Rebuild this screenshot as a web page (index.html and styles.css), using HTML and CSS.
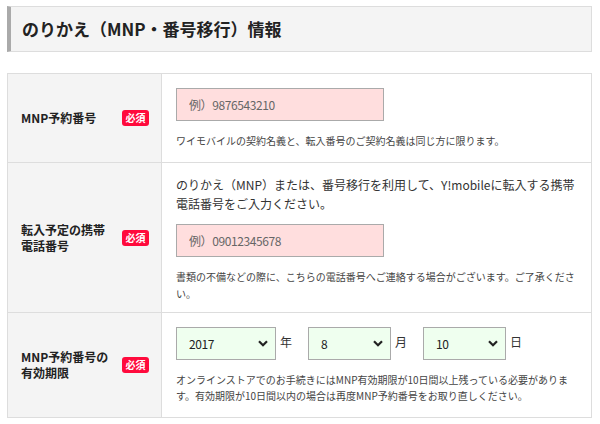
FILE: index.html
```html
<!DOCTYPE html>
<html lang="ja">

<head>
    <meta charset="UTF-8">
    <meta name="viewport" content="width=device-width, initial-scale=1.0">
    <title>のりかえ（MNP・番号移行）情報</title>
    <link rel="stylesheet" href="styles.css">
</head>

<body>
    <div class="page">
        <h2 class="section-title">のりかえ（MNP・番号移行）情報</h2>

        <table class="form-table">
            <tr class="row-mnp">
                <th>
                    <div class="label">
                        <span class="label-text">MNP予約番号</span>
                        <span class="required">必須</span>
                    </div>
                </th>
                <td>
                    <input class="text-input" type="text" placeholder="例）9876543210">
                    <p class="note">ワイモバイルの契約名義と、転入番号のご契約名義は同じ方に限ります。</p>
                </td>
            </tr>
            <tr class="row-tel">
                <th>
                    <div class="label">
                        <span class="label-text">転入予定の携帯電話番号</span>
                        <span class="required">必須</span>
                    </div>
                </th>
                <td>
                    <p class="lead">のりかえ（MNP）または、番号移行を利用して、Y!mobileに転入する携帯電話番号をご入力ください。</p>
                    <input class="text-input" type="text" placeholder="例）09012345678">
                    <p class="note">書類の不備などの際に、こちらの電話番号へご連絡する場合がございます。ご了承ください。</p>
                </td>
            </tr>
            <tr class="row-limit">
                <th>
                    <div class="label">
                        <span class="label-text">MNP予約番号の有効期限</span>
                        <span class="required">必須</span>
                    </div>
                </th>
                <td>
                    <div class="date-group">
                        <div class="select-wrap select-year">
                            <select>
                                <option>2017</option>
                                <option>2018</option>
                            </select>
                            <svg class="chevron" width="10" height="7" viewBox="0 0 10 7">
                                <path d="M1 1.2 L5 5.2 L9 1.2" fill="none" stroke="#222" stroke-width="2.2" />
                            </svg>
                        </div>
                        <span class="unit">年</span>
                        <div class="select-wrap">
                            <select>
                                <option>8</option>
                                <option>9</option>
                            </select>
                            <svg class="chevron" width="10" height="7" viewBox="0 0 10 7">
                                <path d="M1 1.2 L5 5.2 L9 1.2" fill="none" stroke="#222" stroke-width="2.2" />
                            </svg>
                        </div>
                        <span class="unit">月</span>
                        <div class="select-wrap">
                            <select>
                                <option>10</option>
                                <option>11</option>
                            </select>
                            <svg class="chevron" width="10" height="7" viewBox="0 0 10 7">
                                <path d="M1 1.2 L5 5.2 L9 1.2" fill="none" stroke="#222" stroke-width="2.2" />
                            </svg>
                        </div>
                        <span class="unit">日</span>
                    </div>
                    <p class="note">オンラインストアでのお手続きにはMNP有効期限が10日間以上残っている必要があります。有効期限が10日間以内の場合は再度MNP予約番号をお取り直しください。</p>
                </td>
            </tr>
        </table>
    </div>
</body>

</html>
```

FILE: styles.css
```css
* {
    margin: 0;
    padding: 0;
    box-sizing: border-box;
}

body {
    font-family: "Noto Sans CJK JP", "Noto Sans", sans-serif;
    color: #333;
    background-color: #fff;
}

.page {
    width: 585px;
    margin: 6px 0 0 7px;
}

.section-title {
    height: 46px;
    line-height: 44px;
    font-size: 17px;
    font-weight: bold;
    color: #222;
    background-color: #f4f4f4;
    border: 1px solid #ddd;
    border-left: 4px solid #aaa;
    padding-left: 11px;
    margin-bottom: 21px;
}

.form-table {
    width: 585px;
    border-collapse: collapse;
}

.form-table th,
.form-table td {
    border: 1px solid #ddd;
    vertical-align: middle;
    text-align: left;
}

.form-table th {
    width: 154px;
    background-color: #f4f4f4;
    padding: 0 12px 0 13px;
}

.form-table td {
    padding: 14px 14px 13px 14px;
}

.label {
    display: flex;
    align-items: center;
    gap: 6px;
}

.label-text {
    flex: 1;
    font-size: 12px;
    font-weight: bold;
    line-height: 16px;
    color: #222;
}

.required {
    width: 27px;
    height: 16px;
    line-height: 16px;
    text-align: center;
    font-size: 10px;
    color: #fff;
    background-color: #ff0a3c;
    border-radius: 3px;
}

.text-input {
    display: block;
    width: 208px;
    height: 33px;
    padding-left: 12px;
    font-family: "Noto Sans CJK JP", sans-serif;
    font-size: 12px;
    letter-spacing: -0.4px;
    background-color: #ffdede;
    border: 1px solid #aaa;
    outline: none;
}

.text-input::placeholder {
    color: #666;
}

.note {
    margin-top: 11px;
    font-size: 10px;
    line-height: 17px;
    color: #444;
}

.row-tel td {
    padding-top: 12px;
    padding-bottom: 10px;
}

.lead {
    font-size: 12px;
    line-height: 19px;
    color: #333;
    margin-bottom: 11px;
}

.date-group {
    display: flex;
    align-items: center;
}

.select-wrap {
    position: relative;
    width: 83px;
    height: 33px;
}

.select-wrap.select-year {
    width: 100px;
}

.select-wrap select {
    width: 100%;
    height: 100%;
    appearance: none;
    -webkit-appearance: none;
    padding-left: 12px;
    font-family: "Noto Sans CJK JP", sans-serif;
    font-size: 12px;
    letter-spacing: -0.4px;
    color: #222;
    background-color: #efffef;
    border: 1px solid #aaa;
    border-radius: 0;
    outline: none;
}

.select-wrap .chevron {
    position: absolute;
    right: 8px;
    top: 13px;
    pointer-events: none;
}

.unit {
    font-size: 12px;
    color: #333;
    margin: -4px 16px 0 4px;
}

.row-limit .note {
    margin-top: 12px;
    line-height: 16px;
}
```
